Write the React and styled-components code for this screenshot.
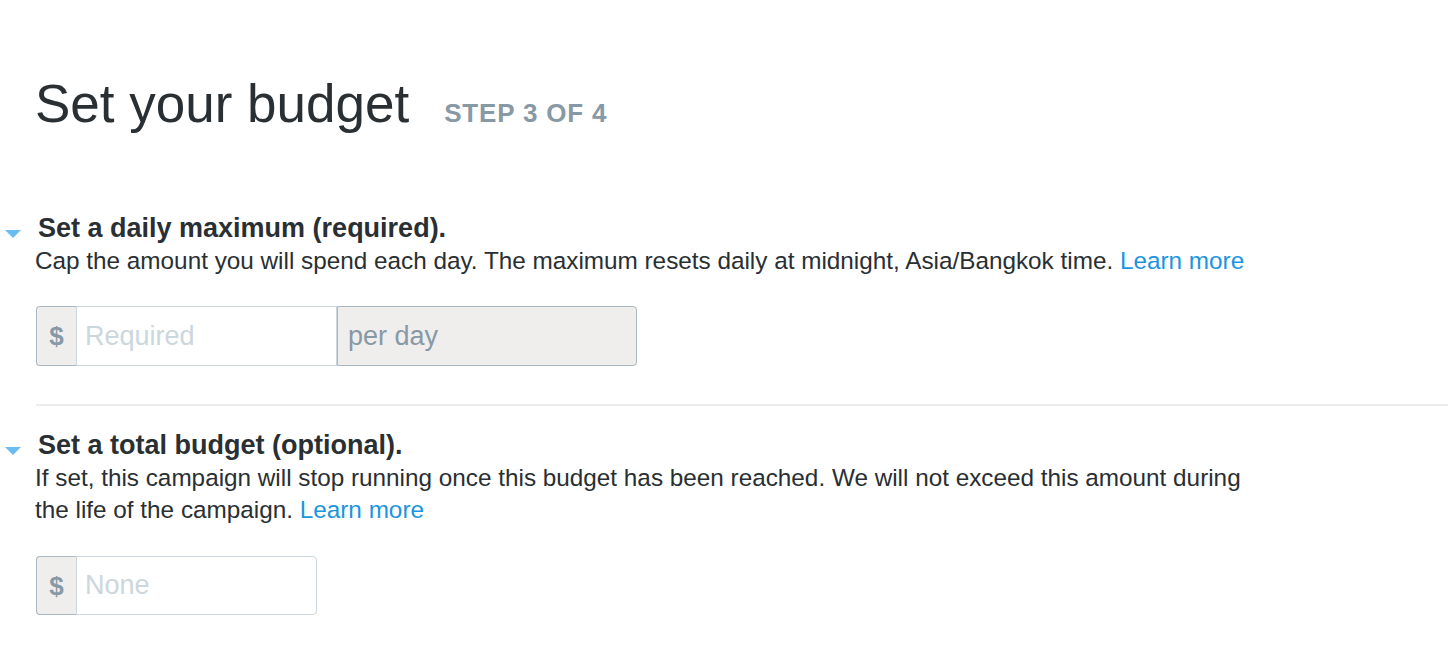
import React from 'react'
import styled, { createGlobalStyle } from 'styled-components'

const GlobalStyle = createGlobalStyle`
  html, body {
    margin: 0;
    padding: 0;
    background: #fff;
  }
  body {
    font-family: "Liberation Sans", Arial, Helvetica, sans-serif;
    color: #292f33;
  }
`

const Page = styled.div`
  width: 1448px;
  height: 648px;
  overflow: hidden;
  padding-left: 35px;
  box-sizing: border-box;
`

const TitleRow = styled.div`
  display: flex;
  align-items: baseline;
  gap: 35px;
  margin-top: 77px;
`

const Title = styled.h1`
  margin: 0;
  font-size: 53px;
  line-height: 53px;
  font-weight: 300;
  color: #292f33;
`

const Step = styled.span`
  font-size: 26px;
  font-weight: 700;
  letter-spacing: 0.8px;
  color: #8899a6;
`

const Section = styled.section`
  margin-top: ${p => p.$top}px;
`

const SectionHeader = styled.div`
  display: flex;
  align-items: flex-start;
  margin-left: -30px;
  margin-bottom: 1px;
`

const Caret = styled.span`
  width: 0;
  height: 0;
  margin-top: 18px;
  margin-right: 17px;
  border-left: 8.5px solid transparent;
  border-right: 8.5px solid transparent;
  border-top: 8px solid #6bbcf0;
`

const Heading = styled.h2`
  margin: 0;
  font-size: 27px;
  line-height: 32px;
  font-weight: 700;
  color: #292f33;
`

const Description = styled.p`
  margin: 0;
  max-width: 1215px;
  font-size: 24.3px;
  line-height: 32px;
  color: #292f33;
`

const Link = styled.a`
  color: #1b95e0;
  text-decoration: none;
`

const InputGroup = styled.div`
  display: flex;
  margin: ${p => p.$top}px 0 0 1px;
  height: ${p => p.$height}px;
`

const Addon = styled.span`
  display: flex;
  align-items: center;
  box-sizing: border-box;
  background: #f0eded;
  border: 1.5px solid #aab8c2;
  color: #8899a6;
  font-size: 27px;
`

const Dollar = styled(Addon)`
  width: 40px;
  justify-content: center;
  font-weight: 700;
  border-right: none;
  border-radius: 4px 0 0 4px;
  font-size: 26px;
  padding-top: 1px;
`

const Suffix = styled(Addon)`
  width: 300px;
  padding-left: 10px;
  border-radius: 0 4px 4px 0;
`

const Field = styled.input`
  box-sizing: border-box;
  width: ${p => p.$width}px;
  height: 100%;
  margin: 0;
  padding: 0 8px;
  border: 1.5px solid #ccd6dd;
  border-radius: ${p => (p.$last ? '0 4px 4px 0' : '0')};
  font-family: "Liberation Sans", Arial, sans-serif;
  font-size: 27px;
  color: #292f33;
  outline: none;
  background: #fff;

  &::placeholder {
    color: #ccd6dd;
  }
`

const Divider = styled.hr`
  margin: 38px 0 0 1px;
  border: none;
  height: 2px;
  background: #eeecec;
`

export default function App() {
  return (
    <Page>
      <GlobalStyle />
      <TitleRow>
        <Title>Set your budget</Title>
        <Step>STEP 3 OF 4</Step>
      </TitleRow>

      <Section $top={82}>
        <SectionHeader>
          <Caret />
          <Heading>Set a daily maximum (required).</Heading>
        </SectionHeader>
        <Description>
          Cap the amount you will spend each day. The maximum resets daily at midnight, Asia/Bangkok time.{' '}
          <Link href="#">Learn more</Link>
        </Description>
        <InputGroup $top={29} $height={60}>
          <Dollar>$</Dollar>
          <Field $width={261} placeholder="Required" />
          <Suffix>per day</Suffix>
        </InputGroup>
      </Section>

      <Divider />

      <Section $top={23}>
        <SectionHeader>
          <Caret />
          <Heading>Set a total budget (optional).</Heading>
        </SectionHeader>
        <Description>
          If set, this campaign will stop running once this budget has been reached. We will not exceed this amount during
          the life of the campaign. <Link href="#">Learn more</Link>
        </Description>
        <InputGroup $top={30} $height={59}>
          <Dollar>$</Dollar>
          <Field $width={241} $last placeholder="None" />
        </InputGroup>
      </Section>
    </Page>
  )
}
